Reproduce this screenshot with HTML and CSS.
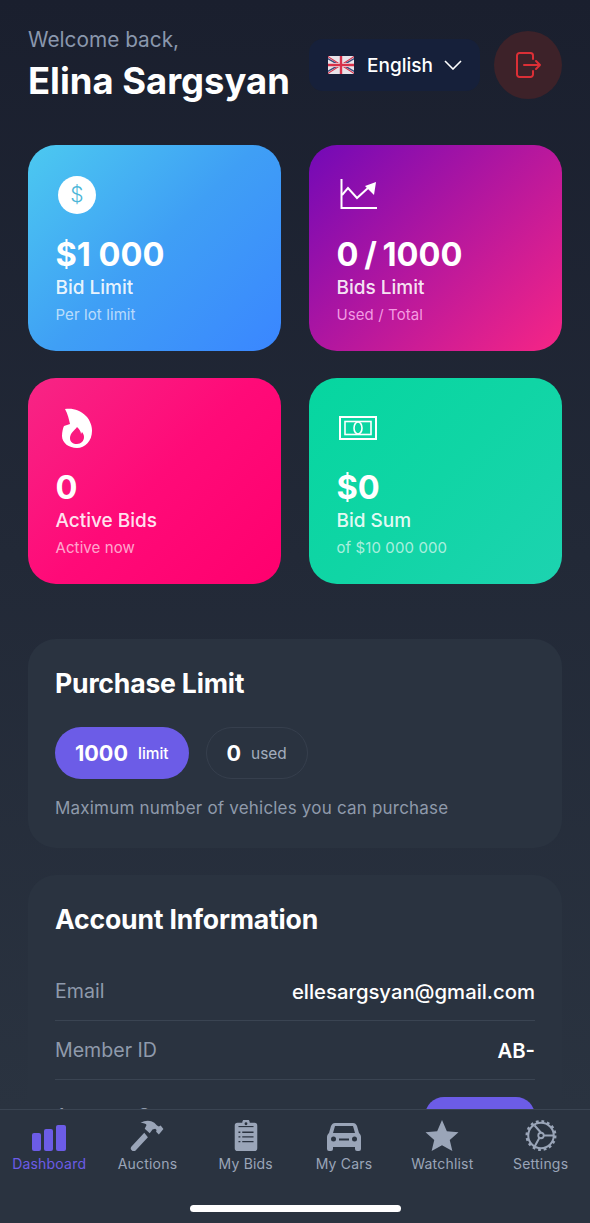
FILE: index.html
```html
<!DOCTYPE html>
<html lang="en">
<head>
<meta charset="utf-8">
<title>Dashboard</title>
<link rel="stylesheet" href="styles.css">
</head>
<body>
<div class="app">
  <main class="content">
    <header class="header">
      <div class="greeting">
        <div class="welcome">Welcome back,</div>
        <div class="name">Elina Sargsyan</div>
      </div>
      <div class="lang">
        <svg class="flag" viewBox="0 0 26 18" width="26" height="18">
          <rect width="26" height="18" rx="1.5" fill="#e8e4ea"/>
          <path d="M0 2 9 7H6L0 3.6ZM26 2 17 7h3l6-3.4ZM0 16l9-5H6L0 14.4ZM26 16l-9-5h3l6 3.4Z" fill="#3b4a7c"/>
          <path d="M0 0 11 7H9L0 1.3ZM26 0 15 7h2l9-5.7ZM0 18l11-7H9L0 16.7ZM26 18l-11-7h2l9 5.7Z" fill="#d8304a"/>
          <path d="M11 0h4v7h11v4H15v7h-4v-7H0V7h11Z" fill="#e8e4ea"/>
          <path d="M11.8 0h2.4v7.8H26v2.4H14.2V18h-2.4v-7.8H0V7.8h11.8Z" fill="#d8304a"/>
        </svg>
        <span class="lang-text">English</span>
        <svg class="chev" viewBox="0 0 18 10" width="18" height="10"><path d="M1 1l8 8 8-8" fill="none" stroke="#fff" stroke-width="1.6"/></svg>
      </div>
      <div class="logout">
        <svg viewBox="0 0 28 28" width="28" height="28" fill="none" stroke="#dc2f36" stroke-width="2" stroke-linecap="round" stroke-linejoin="round">
          <path d="M19 8V4.500a2.500 2.500 0 0 0-2.500-2.500h-11A2.500 2.500 0 0 0 3 4.500v19A2.500 2.500 0 0 0 5.500 26h11a2.500 2.500 0 0 0 2.500-2.500V20"/>
          <path d="M10 14h16M22 10l4 4-4 4"/>
        </svg>
      </div>
    </header>

    <section class="stats">
      <article class="stat stat-blue">
        <div class="stat-icon">
          <svg viewBox="0 0 38 38" width="38" height="38"><circle cx="19" cy="19" r="19" fill="#fff"/><text x="19" y="26" class="dollar" text-anchor="middle">$</text></svg>
        </div>
        <div class="stat-value">$1 000</div>
        <div class="stat-label">Bid Limit</div>
        <div class="stat-sub">Per lot limit</div>
      </article>
      <article class="stat stat-purple">
        <div class="stat-icon">
          <svg class="icon-chart" viewBox="0 0 38 32" width="38" height="32" fill="none" stroke="#fff" stroke-width="2">
            <path d="M1.500 0v29H37"/>
            <path d="M2 16l6-7 9 10 11-10"/>
            <path d="M25 7 36 3l-2 13Z" fill="#fff" stroke="none"/>
          </svg>
        </div>
        <div class="stat-value value-ratio">0 / 1000</div>
        <div class="stat-label">Bids Limit</div>
        <div class="stat-sub sub-pink">Used / Total</div>
      </article>
      <article class="stat stat-pink">
        <div class="stat-icon">
          <svg class="icon-flame" viewBox="0 0 32 40" width="32" height="40">
            <path fill-rule="evenodd" fill="#fff" d="M4 1c8-1 15 1 21 7 4 4 6 10 6 15 0 10-7 17-15 17C8 40 1 35 1 28c0-4 1-8 2-10l6-2C8 12 7 6 4 1Zm12 18c-2 3-7 6-7 11 0 4 3 6 7 6 4 0 7-3 7-7 0-2-1-4-2-5l-1 2c0-3-2-5-4-7Z"/>
          </svg>
        </div>
        <div class="stat-value">0</div>
        <div class="stat-label">Active Bids</div>
        <div class="stat-sub">Active now</div>
      </article>
      <article class="stat stat-green">
        <div class="stat-icon">
          <svg viewBox="0 0 38 24" width="38" height="24" fill="none" stroke="#fff" stroke-width="2">
            <rect x="1" y="1" width="36" height="22"/>
            <rect x="6" y="5.500" width="26" height="13" stroke-width="1.600"/>
            <ellipse cx="19" cy="12" rx="4" ry="6" stroke-width="1.600"/>
          </svg>
        </div>
        <div class="stat-value">$0</div>
        <div class="stat-label">Bid Sum</div>
        <div class="stat-sub">of $10 000 000</div>
      </article>
    </section>

    <section class="panel purchase">
      <h2 class="panel-title">Purchase Limit</h2>
      <div class="pills">
        <div class="pill pill-on"><strong>1000</strong><span>limit</span></div>
        <div class="pill pill-off"><strong>0</strong><span>used</span></div>
      </div>
      <p class="panel-note">Maximum number of vehicles you can purchase</p>
    </section>

    <section class="panel account">
      <h2 class="panel-title">Account Information</h2>
      <dl class="rows">
        <div class="row"><dt>Email</dt><dd>ellesargsyan@gmail.com</dd></div>
        <div class="row"><dt>Member ID</dt><dd class="strong">AB-</dd></div>
        <div class="row row-last"><dt>Account Status</dt><dd class="status">Active</dd></div>
      </dl>
    </section>
  </main>

  <nav class="tabbar">
    <div class="tabs">
      <div class="tab tab-on">
        <svg viewBox="0 0 34 26" width="34" height="26" fill="#6c5ce7"><rect x="0" y="8" width="9" height="18" rx="2"/><rect x="12" y="4" width="9" height="22" rx="2"/><rect x="24" y="0" width="10" height="26" rx="2"/></svg>
        <span>Dashboard</span>
      </div>
      <div class="tab">
        <svg viewBox="0 0 36 34" width="36" height="34" fill="#9aa5b8">
          <path d="M15 14 19 19 6 33a3 3 0 0 1-5-4Z"/>
          <path d="M11 3c5-3 11-3 15 0l3 3 2 1 2-1 3 4-5 6-3-3 .5-2-1.500-1.500-3 1-3 4-5.500-5 2-4C17 4 14 3 11 3Z"/>
        </svg>
        <span>Auctions</span>
      </div>
      <div class="tab">
        <svg viewBox="0 0 24 33" width="24" height="33">
          <path fill="#9aa5b8" d="M8 3a4 4 0 0 1 8 0h5a3 3 0 0 1 3 3v24a3 3 0 0 1-3 3H3a3 3 0 0 1-3-3V6a3 3 0 0 1 3-3Z"/>
          <circle cx="12" cy="4" r="1.500" fill="#2a3340"/>
          <path d="M4 7h16" stroke="#2a3340" stroke-width="1.200"/>
          <path d="M8 13h12M8 18h12M8 23h12M4 13h2M4 18h2M4 23h2" stroke="#2a3340" stroke-width="1.500"/>
        </svg>
        <span>My Bids</span>
      </div>
      <div class="tab">
        <svg viewBox="0 0 34 28" width="34" height="28">
          <path fill="#9aa5b8" fill-rule="evenodd" d="M8 0h18c2 0 3 1 4 3l2 7c1 1 2 2 2 4v12a2 2 0 0 1-2 2h-2a2 2 0 0 1-2-2v-2H6v2a2 2 0 0 1-2 2H2a2 2 0 0 1-2-2V14c0-2 1-3 2-4l2-7c1-2 2-3 4-3Zm0 3L6 10h22l-2-7Z"/>
          <circle cx="6.500" cy="16" r="2.500" fill="#2a3340"/>
          <circle cx="27.500" cy="16" r="2.500" fill="#2a3340"/>
          <path d="M12 16.500h10" stroke="#2a3340" stroke-width="2"/>
        </svg>
        <span>My Cars</span>
      </div>
      <div class="tab">
        <svg viewBox="0 0 34 32" width="34" height="32"><path fill="#9aa5b8" d="M17 0l5 11.500 12 1.100-9 8 2.700 11.400L17 26l-10.700 6L9 20.600l-9-8 12-1.100Z"/></svg>
        <span>Watchlist</span>
      </div>
      <div class="tab">
        <svg viewBox="0 0 34 34" width="34" height="34" fill="none" stroke="#9aa5b8">
          <circle cx="17" cy="17" r="14" stroke-width="2.200"/>
          <circle cx="17" cy="17" r="15.500" stroke-width="3" stroke-dasharray="3 3.090"/>
          <circle cx="17" cy="17" r="3" stroke-width="2"/>
          <path d="M17 14 10 6M20 17H31M15 20 10 29" stroke-width="2.200"/>
        </svg>
        <span>Settings</span>
      </div>
    </div>
    <div class="home-indicator"></div>
  </nav>
</div>
</body>
</html>
```
FILE: styles.css
```css
* { box-sizing: border-box; }
html, body { margin: 0; padding: 0; }
body {
  width: 590px;
  height: 1223px;
  overflow: hidden;
  background: #1a1f2e;
  font-family: Inter, "Liberation Sans", sans-serif;
  color: #fff;
}
.app {
  height: 1223px;
  display: flex;
  flex-direction: column;
}
.content {
  flex: 1;
  min-height: 0;
  overflow: hidden;
  padding: 26px 28px 0;
  background: linear-gradient(180deg, #1a1f2e 0%, #2a3340 100%);
}

.header {
  display: flex;
  align-items: center;
  height: 78px;
}
.greeting { flex: 1; min-width: 0; }
.welcome {
  font-size: 20.8px;
  line-height: 26px;
  color: #8a97ad;
}
.name {
  margin-top: 5px;
  font-size: 36.4px;
  line-height: 46px;
  font-weight: 700;
  white-space: nowrap;
}
.lang {
  width: 171px;
  height: 52px;
  padding-left: 19px;
  border-radius: 14px;
  background: #16203a;
  display: flex;
  align-items: center;
}
.flag { margin-right: 13px; }
.lang-text { font-size: 19px; font-weight: 500; margin-right: 11px; }
.logout {
  width: 68px;
  height: 68px;
  margin-left: 14px;
  border-radius: 50%;
  background: #3d2229;
  display: flex;
  align-items: center;
  justify-content: center;
}

.stats {
  margin-top: 41px;
  display: grid;
  grid-template-columns: 253px 253px;
  column-gap: 28px;
  row-gap: 27px;
}
.stat {
  height: 206px;
  border-radius: 28px;
  padding: 28px 28px 0 27.5px;
  display: flex;
  flex-direction: column;
}
.stat-blue { background: linear-gradient(135deg, #4cc9f0 0%, #3f9ff5 50%, #3a86ff 100%); }
.stat-purple { background: linear-gradient(135deg, #7209b7 0%, #b5179e 50%, #f72585 100%); }
.stat-pink { background: linear-gradient(135deg, #f72585 0%, #ff0a78 50%, #ff006e 100%); }
.stat-green { background: linear-gradient(135deg, #06d6a0 0%, #10d5a5 50%, #1dd3b0 100%); }
.stat-icon {
  height: 44px;
  padding-left: 2px;
  display: flex;
  align-items: center;
}
.icon-chart { margin-left: 1px; }
.icon-flame { margin-left: 3px; }
.dollar {
  font-family: Inter, sans-serif;
  font-size: 21px;
  font-weight: 300;
  fill: #4cb6d8;
}
.stat-value {
  margin-top: 17px;
  font-size: 32.6px;
  line-height: 40px;
  font-weight: 700;
  white-space: nowrap;
}
.value-ratio { word-spacing: -2px; }
.stat-label {
  margin-top: 2px;
  font-size: 19px;
  line-height: 24px;
  font-weight: 500;
  color: rgba(255, 255, 255, 0.9);
}
.stat-sub {
  margin-top: 5px;
  font-size: 15px;
  line-height: 20px;
  letter-spacing: 0.1px;
  color: rgba(255, 255, 255, 0.65);
}
.sub-pink { color: rgba(255, 180, 240, 0.85); }

.panel {
  background: #2a3340;
  border-radius: 28px;
  padding: 26px 27px;
}
.purchase {
  margin-top: 55px;
  height: 209px;
}
.account {
  margin-top: 27px;
  height: 300px;
}
.panel-title {
  margin: 0;
  font-size: 26.6px;
  line-height: 36px;
  font-weight: 700;
  letter-spacing: -0.2px;
}
.pills {
  margin-top: 26px;
  display: flex;
  gap: 17px;
}
.pill {
  height: 52px;
  padding: 0 20px;
  border-radius: 26px;
  display: flex;
  align-items: center;
  gap: 10px;
}
.pill strong { font-size: 21.6px; font-weight: 700; }
.pill span { font-size: 15.400px; }
.pill-on { background: #6c5ce7; }
.pill-on span { font-weight: 500; }
.pill-off {
  border: 1px solid #363f4d;
}
.pill-off span { color: #a3adbd; }
.panel-note {
  margin: 17px 0 0;
  font-size: 17px;
  line-height: 24px;
  letter-spacing: 0.2px;
  color: #8f9aab;
}

.rows { margin: 25px 0 0; }
.row {
  height: 59px;
  display: flex;
  align-items: center;
  justify-content: space-between;
  border-bottom: 1px solid #3a4452;
}
.row-last {
  height: 72px;
  border-bottom: 0;
}
.row dt {
  font-size: 19.6px;
  color: #8f9aab;
}
.row dd {
  margin: 0;
  font-size: 20.3px;
  font-weight: 500;
}
.row dd.strong { font-weight: 600; }
.row dd.status {
  width: 110px;
  height: 38px;
  border-radius: 19px;
  background: #6c5ce7;
  text-align: center;
  line-height: 38px;
  font-size: 16px;
}

.tabbar {
  height: 114px;
  flex: none;
  background: #2a3340;
  border-top: 1px solid #3a4452;
  position: relative;
}
.tabs {
  display: grid;
  grid-template-columns: repeat(6, 98.3px);
  padding-top: 10px;
}
.tab {
  display: flex;
  flex-direction: column;
  align-items: center;
  justify-content: flex-end;
  height: 52px;
  gap: 4px;
  font-size: 14px;
  letter-spacing: 0.2px;
  color: #9aa5b8;
  white-space: nowrap;
}
.tab-on { color: #6c5ce7; }
.home-indicator {
  position: absolute;
  left: 190px;
  top: 95px;
  width: 211px;
  height: 7px;
  border-radius: 4px;
  background: #fff;
}
```
